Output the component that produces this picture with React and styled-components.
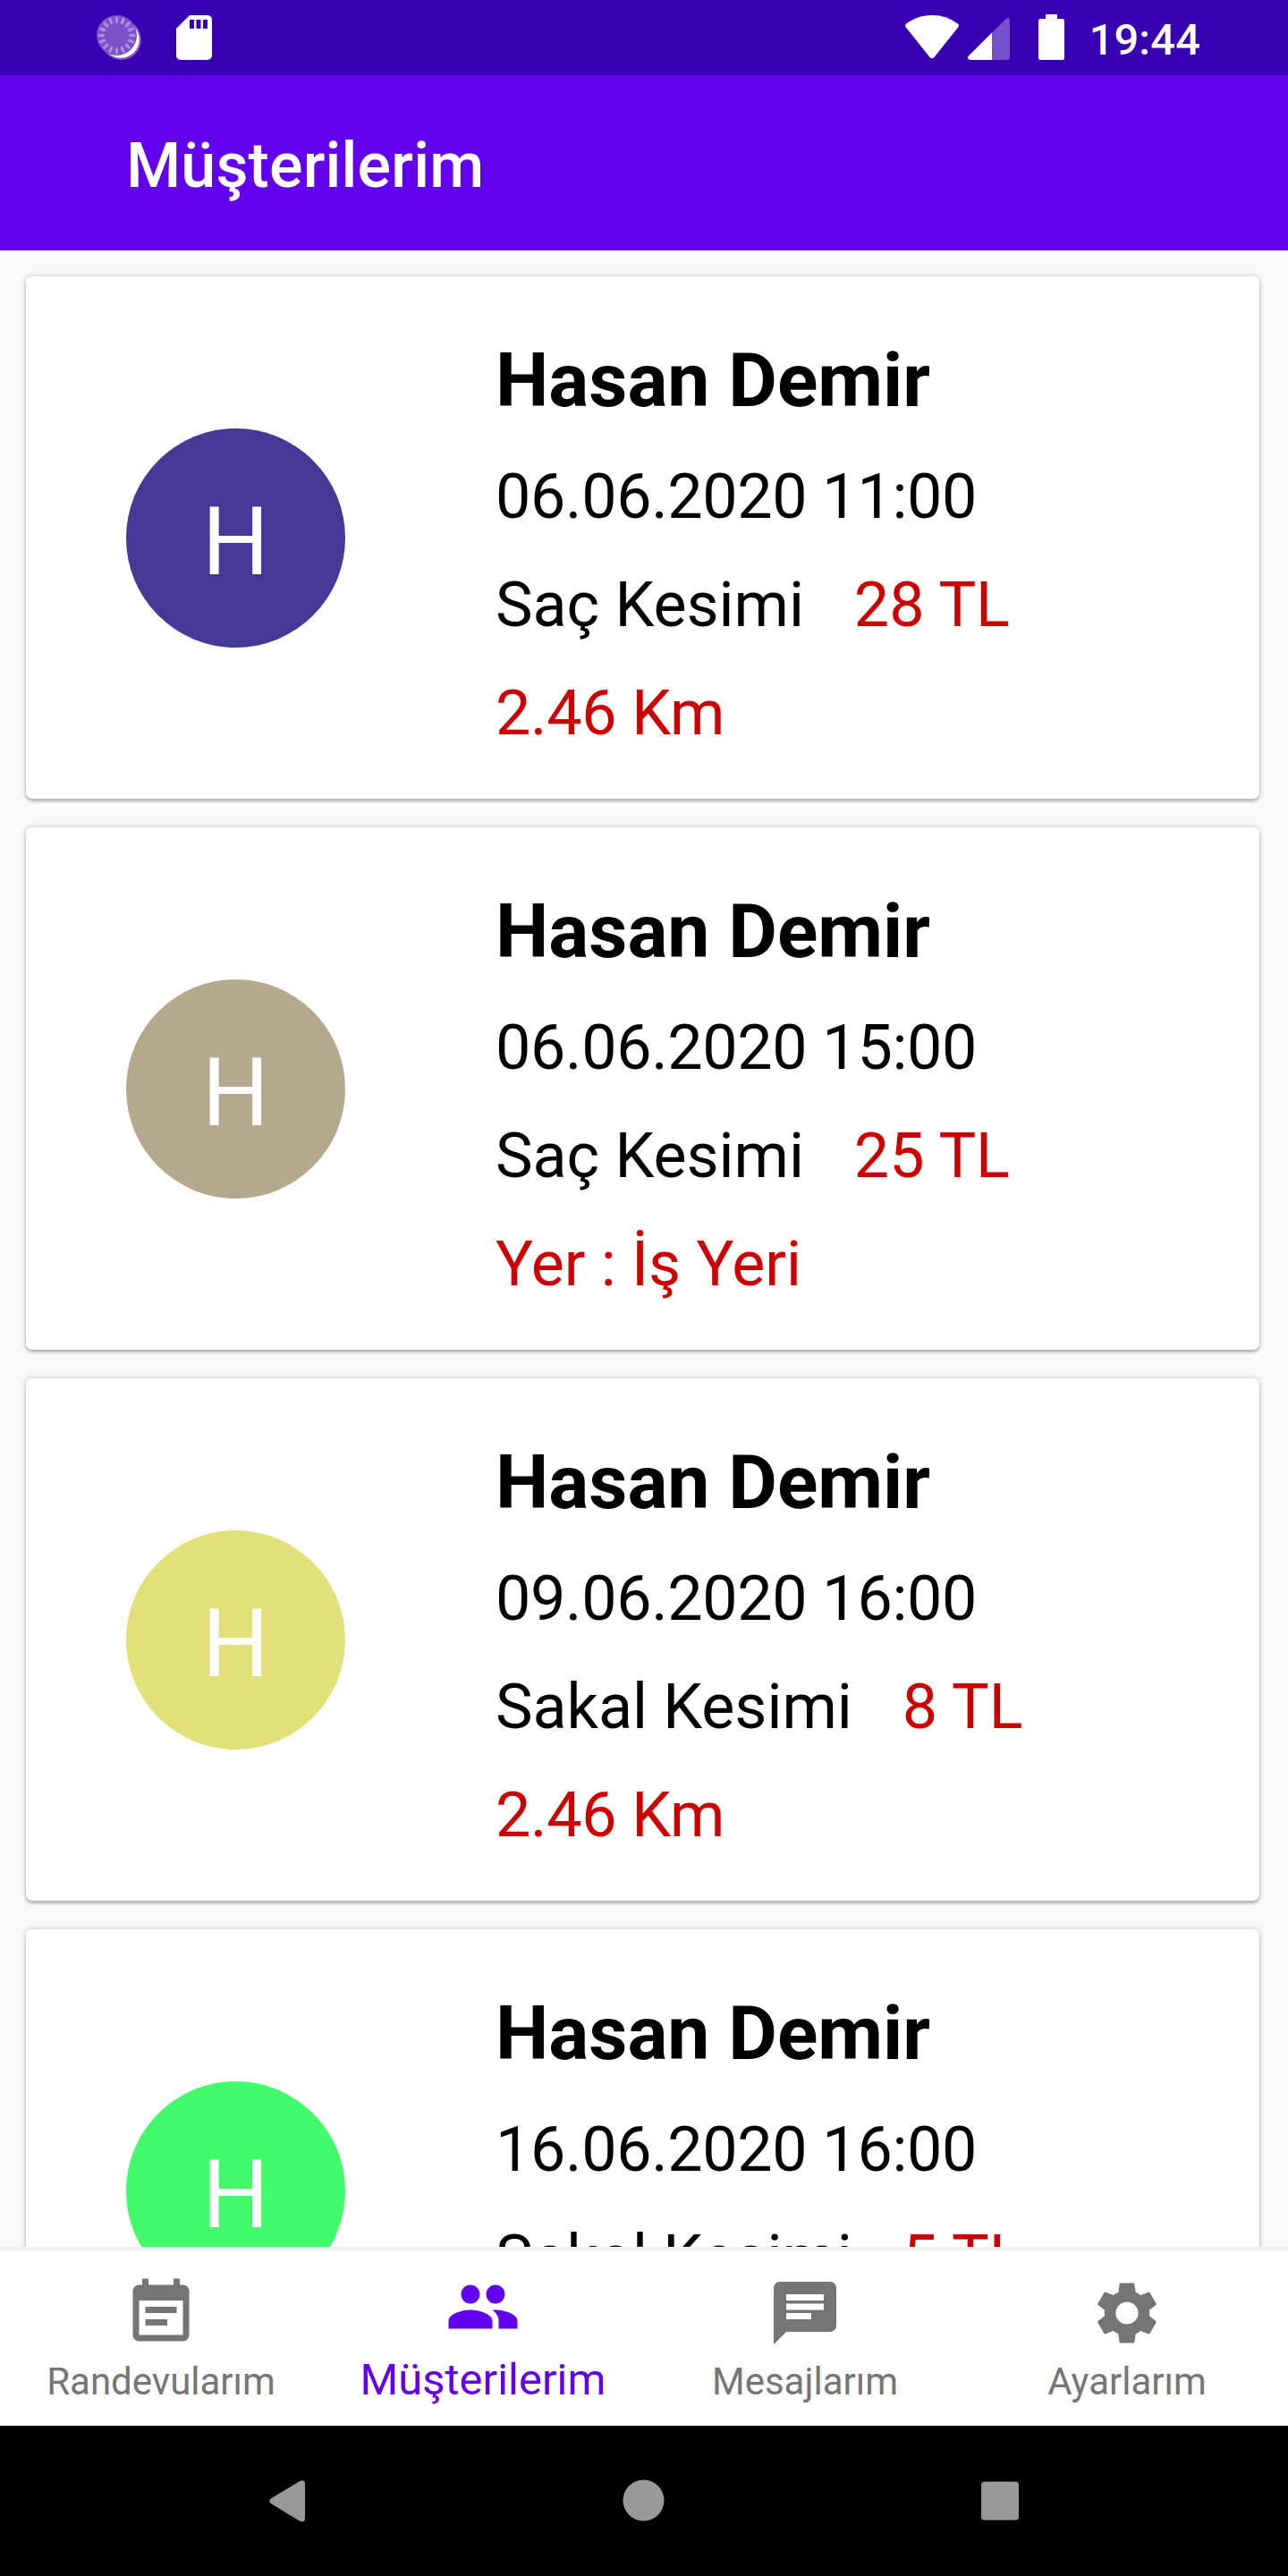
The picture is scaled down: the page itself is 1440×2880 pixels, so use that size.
import React from "react";
import styled, { createGlobalStyle } from "styled-components";

const Global = createGlobalStyle`
  body { margin: 0; background: #fafafa; }
  * { box-sizing: border-box; }
`;

const Screen = styled.div`
  width: 1440px;
  height: 2880px;
  display: flex;
  flex-direction: column;
  overflow: hidden;
  background: #fafafa;
  color: #000;
  font-family: Roboto, "Noto Sans", sans-serif;
`;

const StatusBar = styled.header`
  flex: none;
  height: 84px;
  padding: 0 98px 0 101px;
  display: flex;
  justify-content: space-between;
  background: #3700b3;
  color: #fff;
`;

const StatusGroup = styled.div`
  display: flex;
  svg { display: block; flex: none; }
`;

const Clock = styled.span`
  margin-left: 3px;
  font-size: 49px;
  font-weight: 500;
  line-height: 90px;
`;

const AppBar = styled.div`
  flex: none;
  height: 196px;
  padding-left: 141px;
  background: #6200ee;
  color: #fff;
`;

const Title = styled.h1`
  margin: 0;
  font-size: 70px;
  font-weight: 500;
  line-height: 202px;
  letter-spacing: 0.15px;
`;

const List = styled.main`
  flex: 1;
  min-height: 0;
  overflow: hidden;
  padding: 29px 32px 0 29px;
  display: flex;
  flex-direction: column;
  gap: 32px;
`;

const Card = styled.article`
  flex: none;
  height: 584px;
  display: flex;
  background: #fff;
  border-radius: 7px;
  box-shadow: 0 3px 3px rgba(0, 0, 0, 0.2), 0 0 7px rgba(0, 0, 0, 0.22);
`;

const Avatar = styled.div`
  flex: none;
  width: 245px;
  height: 245px;
  margin: 170px 168px 0 112px;
  border-radius: 50%;
  background: ${(p) => p.$color};
  color: #fff;
  font-size: 105px;
  line-height: 255px;
  text-align: center;
`;

const Details = styled.div`
  padding-top: 51px;
`;

const Name = styled.h2`
  margin: 0 0 4px;
  font-size: 84px;
  font-weight: 700;
  line-height: 131px;
`;

const Line = styled.div`
  display: flex;
  gap: 56px;
  font-size: 70px;
  line-height: 121px;
  white-space: nowrap;
  letter-spacing: ${(p) => (p.$numeric ? "-0.33px" : "-0.05px")};
  color: ${(p) => (p.$accent ? "#cc0000" : "#000")};
`;

const Price = styled.span`
  color: #cc0000;
`;

const TabBar = styled.nav`
  flex: none;
  height: 200px;
  display: grid;
  grid-template-columns: repeat(4, 1fr);
  border-top: 4px solid #f1f1f1;
  background: #fff;
`;

const Tab = styled.div`
  display: flex;
  flex-direction: column;
  align-items: center;
  padding-top: ${(p) => (p.$active ? 21 : 28)}px;
  color: ${(p) => (p.$active ? "#6200ee" : "#757575")};
  svg { display: block; width: 84px; height: 84px; }
`;

const TabLabel = styled.span`
  margin-top: ${(p) => (p.$active ? 10 : 5)}px;
  font-size: ${(p) => (p.$active ? 49 : 42)}px;
  line-height: 60px;
`;

const SystemBar = styled.footer`
  flex: none;
  height: 168px;
  background: #000;
  svg { display: block; }
`;

const customers = [
  { color: "#443996", date: "06.06.2020 11:00", service: "Saç Kesimi", price: "28 TL", place: "2.46 Km", distance: true },
  { color: "#b4a98c", date: "06.06.2020 15:00", service: "Saç Kesimi", price: "25 TL", place: "Yer : İş Yeri" },
  { color: "#e2e079", date: "09.06.2020 16:00", service: "Sakal Kesimi", price: "8 TL", place: "2.46 Km", distance: true },
  { color: "#41fb6b", date: "16.06.2020 16:00", service: "Sakal Kesimi", price: "5 TL" },
];

const tabs = [
  {
    label: "Randevularım",
    path: "M17 10H7v2h10v-2zm2-7h-1V1h-2v2H8V1H6v2H5c-1.11 0-1.99.9-1.99 2L3 19c0 1.1.89 2 2 2h14c1.1 0 2-.9 2-2V5c0-1.1-.9-2-2-2zm0 16H5V8h14v11zm-5-5H7v2h7v-2z",
  },
  {
    label: "Müşterilerim",
    active: true,
    path: "M16 11c1.66 0 2.99-1.34 2.99-3S17.66 5 16 5c-1.66 0-3 1.34-3 3s1.34 3 3 3zm-8 0c1.66 0 2.99-1.34 2.99-3S9.66 5 8 5C6.34 5 5 6.34 5 8s1.34 3 3 3zm0 2c-2.33 0-7 1.17-7 3.5V19h14v-2.5c0-2.33-4.67-3.5-7-3.5zm8 0c-.29 0-.62.02-.97.05 1.16.84 1.97 1.97 1.97 3.45V19h6v-2.5c0-2.33-4.67-3.5-7-3.5z",
  },
  {
    label: "Mesajlarım",
    path: "M20 2H4c-1.1 0-1.99.9-1.99 2L2 22l4-4h14c1.1 0 2-.9 2-2V4c0-1.1-.9-2-2-2zM6 9h12v2H6V9zm8 5H6v-2h8v2zm4-6H6V6h12v2z",
  },
  {
    label: "Ayarlarım",
    path: "M19.14 12.94c.04-.3.06-.61.06-.94 0-.32-.02-.64-.07-.94l2.03-1.58c.18-.14.23-.41.12-.61l-1.92-3.32c-.12-.22-.37-.29-.59-.22l-2.39.96c-.5-.38-1.03-.7-1.62-.94l-.36-2.54c-.04-.24-.24-.41-.48-.41h-3.84c-.24 0-.43.17-.47.41l-.36 2.54c-.59.24-1.13.57-1.62.94l-2.39-.96c-.22-.08-.47 0-.59.22L2.74 8.87c-.12.21-.08.47.12.61l2.03 1.58c-.05.3-.09.63-.09.94s.02.64.07.94l-2.03 1.58c-.18.14-.23.41-.12.61l1.92 3.32c.12.22.37.29.59.22l2.39-.96c.5.38 1.03.7 1.62.94l.36 2.54c.05.24.24.41.48.41h3.84c.24 0 .44-.17.47-.41l.36-2.54c.59-.24 1.13-.56 1.62-.94l2.39.96c.22.08.47 0 .59-.22l1.92-3.32c.12-.22.07-.47-.12-.61l-2.01-1.58zM12 15.6c-1.98 0-3.6-1.62-3.6-3.6s1.62-3.6 3.6-3.6 3.6 1.62 3.6 3.6-1.62 3.6-3.6 3.6z",
  },
];

const rays = Array.from({ length: 16 }, (_, i) => i * 22.5);

function NotificationIcons() {
  return (
    <svg width="150" height="84" viewBox="101 0 150 84">
      <circle cx="135.500" cy="44.500" r="22.500" fill="#7c52cb" />
      <circle cx="135" cy="44" r="20.800" fill="#fff" />
      <circle cx="130.500" cy="39.500" r="22.500" fill="#7c52cb" />
      {rays.map((a) => (
        <path key={a} d="M130.500 20v4.500" stroke="#ab92dd" strokeWidth="3" strokeLinecap="round" transform={`rotate(${a} 130.500 39.500)`} />
      ))}
      <path d="M212 17h20a5 5 0 0 1 5 5v40a5 5 0 0 1-5 5h-30a5 5 0 0 1-5-5V32z" fill="#fff" />
      <path d="M212 22h5v10h-5zM219.500 22h5v10h-5zM227 22h5v10h-5z" fill="#3700b3" />
    </svg>
  );
}

function SystemIcons() {
  return (
    <svg width="210" height="84" viewBox="1005 0 210 84">
      <path d="M1013.200 26.400Q1026 17 1042 17t28.800 9.400q2 1.700.4 4L1044.500 64q-2.500 2.700-5 0L1012.800 30.400q-1.600-2.300.4-4z" fill="#fff" />
      <path d="M1109 36.500L1124.500 21q4.500-3 4.500 2v41q0 3-3 3h-17z" fill="#764fca" />
      <path d="M1109 36.500V67h-24q-5-1-2.200-4.500z" fill="#fff" />
      <path d="M1169 16h13v5h5.500q2.500 0 2.500 2.500v41q0 2.500-2.500 2.500h-24q-2.500 0-2.500-2.500v-41q0-2.500 2.500-2.500h5.500z" fill="#fff" />
    </svg>
  );
}

export default function App() {
  return (
    <>
      <Global />
      <Screen>
        <StatusBar>
          <StatusGroup>
            <NotificationIcons />
          </StatusGroup>
          <StatusGroup>
            <SystemIcons />
            <Clock>19:44</Clock>
          </StatusGroup>
        </StatusBar>
        <AppBar>
          <Title>Müşterilerim</Title>
        </AppBar>
        <List>
          {customers.map((c) => (
            <Card key={c.date}>
              <Avatar $color={c.color}>H</Avatar>
              <Details>
                <Name>Hasan Demir</Name>
                <Line $numeric>{c.date}</Line>
                <Line>
                  <span>{c.service}</span>
                  <Price>{c.price}</Price>
                </Line>
                {c.place && (
                  <Line $accent $numeric={c.distance}>
                    {c.place}
                  </Line>
                )}
              </Details>
            </Card>
          ))}
        </List>
        <TabBar>
          {tabs.map((t) => (
            <Tab key={t.label} $active={t.active}>
              <svg viewBox="0 0 24 24" fill="currentColor">
                <path d={t.path} />
              </svg>
              <TabLabel $active={t.active}>{t.label}</TabLabel>
            </Tab>
          ))}
        </TabBar>
        <SystemBar>
          <svg width="1440" height="168" viewBox="0 2712 1440 168" fill="#999">
            <path d="M302.800 2793.500L335 2774q6-2.500 6 3.500v37.500q0 6-6 3.500L302.800 2799q-3-2.700 0-5.500z" />
            <circle cx="719.500" cy="2795.500" r="23" />
            <rect x="1097" y="2774.500" width="42" height="43" rx="4" />
          </svg>
        </SystemBar>
      </Screen>
    </>
  );
}
